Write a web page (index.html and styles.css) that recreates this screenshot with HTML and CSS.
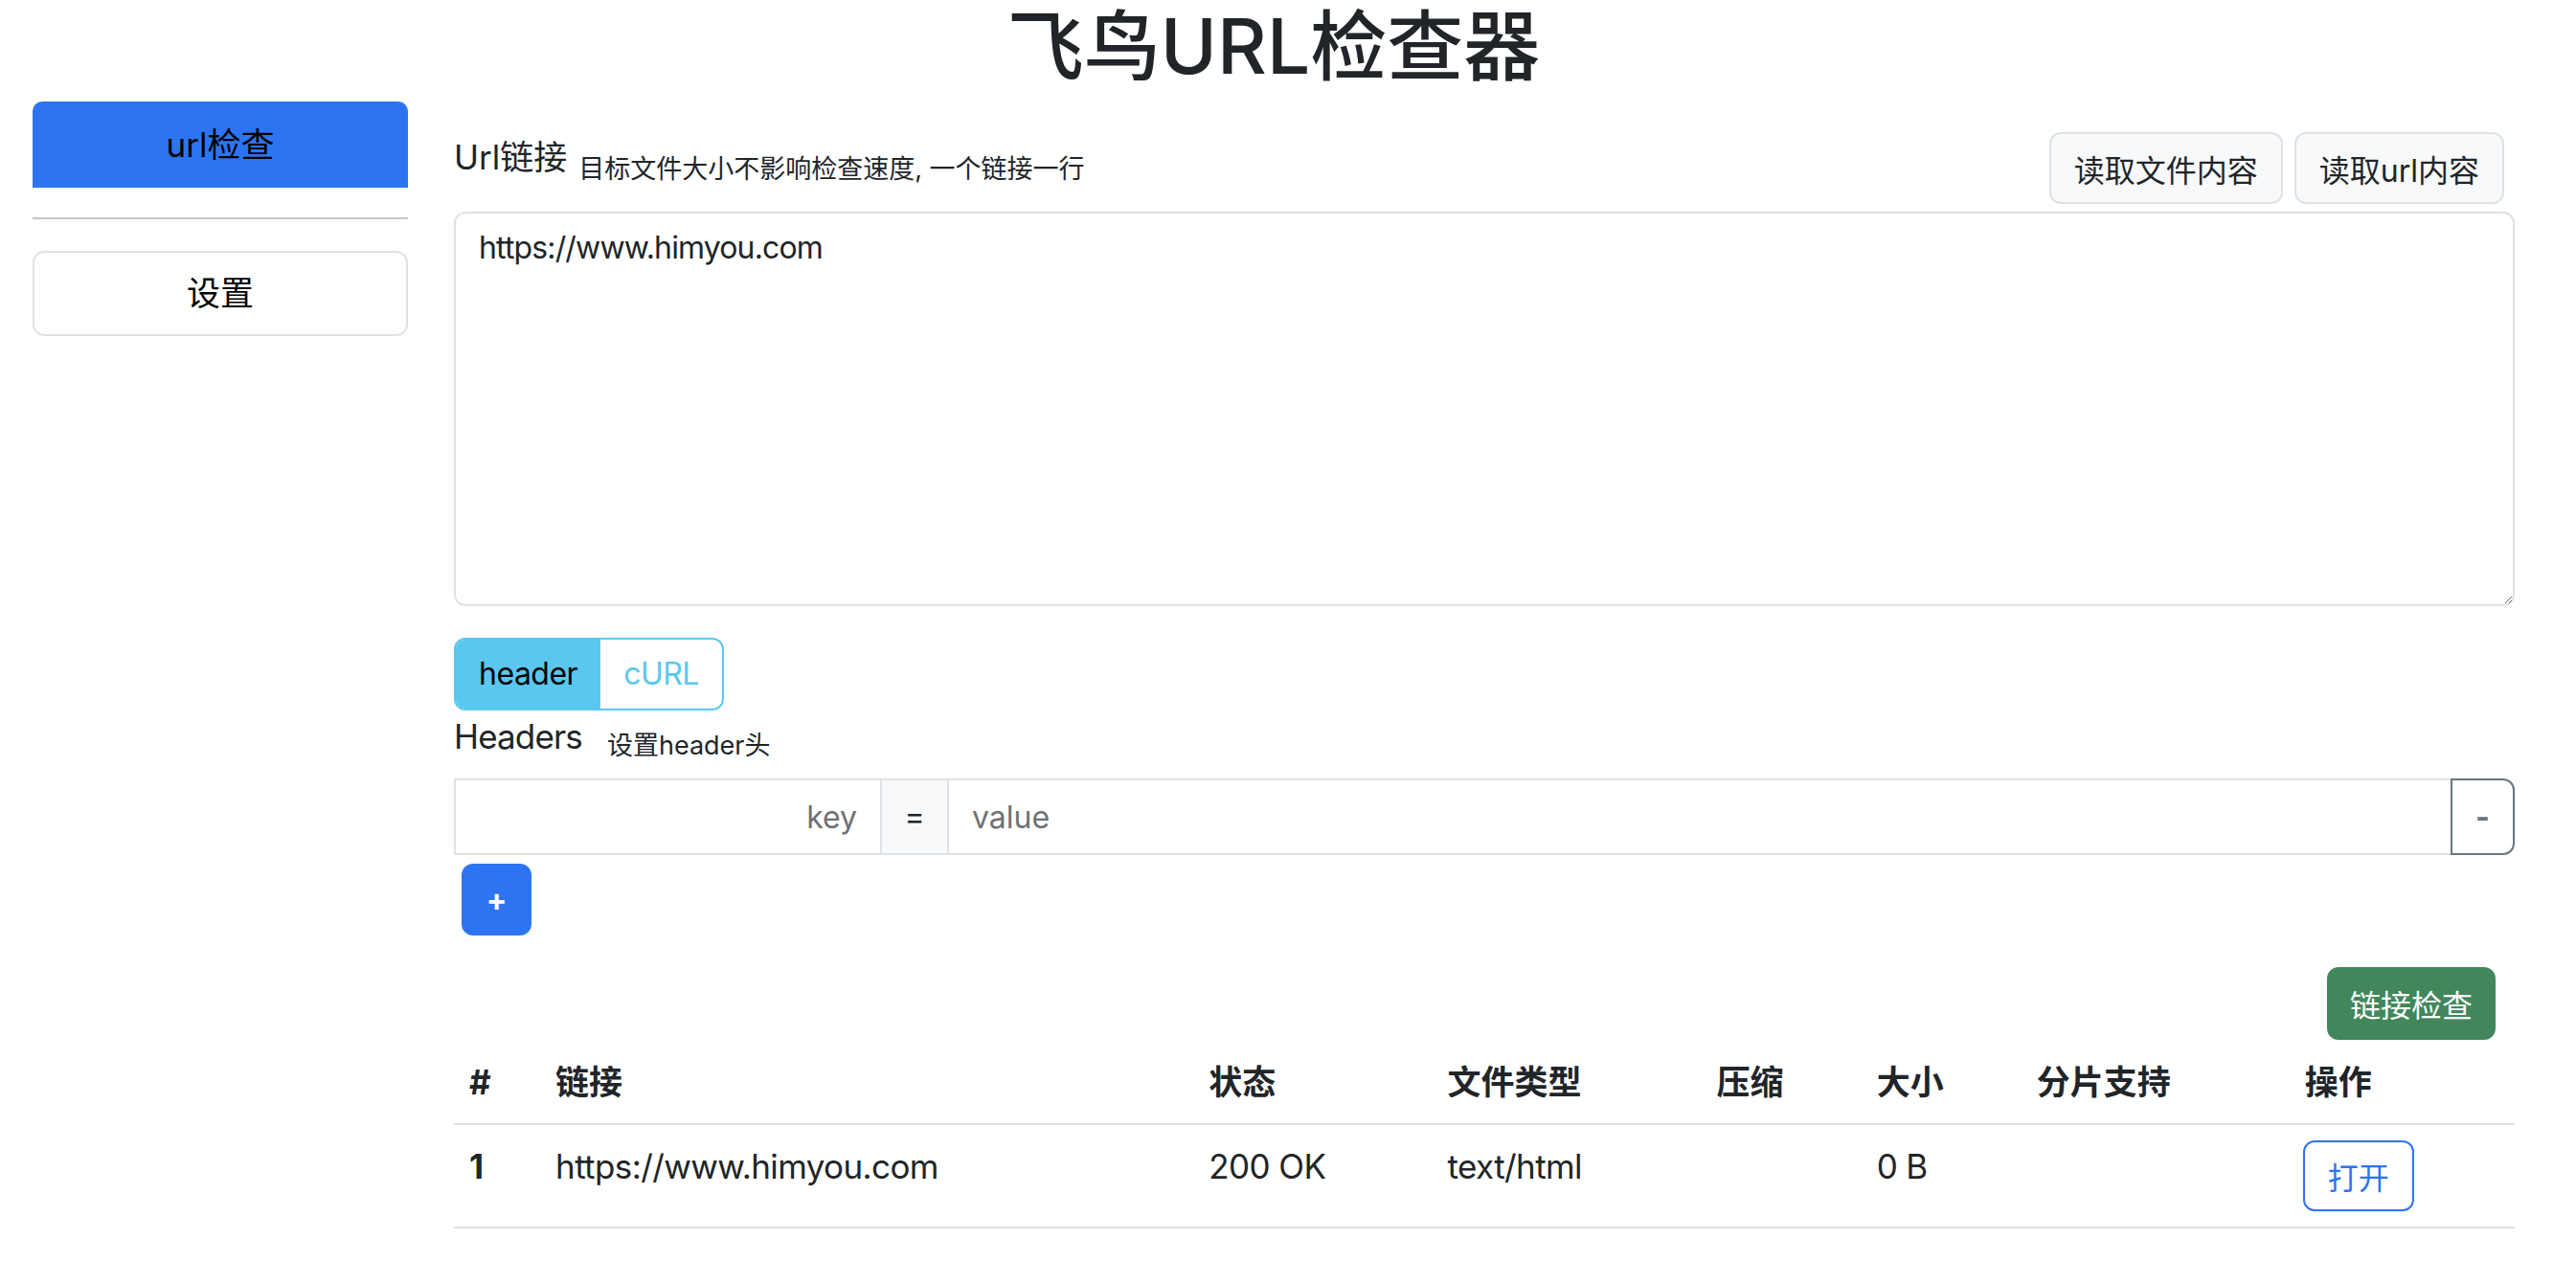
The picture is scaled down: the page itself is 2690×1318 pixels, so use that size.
FILE: index.html
```html
<!DOCTYPE html>
<html lang="zh-CN">
<head>
<meta charset="utf-8">
<title>飞鸟URL检查器</title>
<link rel="stylesheet" href="styles.css">
</head>
<body>
<div class="page">
  <h1 class="title">飞鸟URL检查器</h1>
  <div class="layout">
    <aside class="sidebar">
      <div class="nav-btn active">url检查</div>
      <hr class="divider">
      <div class="nav-btn plain">设置</div>
    </aside>
    <main class="main">
      <div class="url-head">
        <div class="label-group">
          <span class="lbl">Url链接</span>
          <span class="hint hint-url">目标文件大小不影响检查速度, 一个链接一行</span>
        </div>
        <div class="read-btns">
          <button class="btn-light">读取文件内容</button>
          <button class="btn-light">读取url内容</button>
        </div>
      </div>
      <textarea class="urls">https://www.himyou.com</textarea>
      <div class="toggle">
        <span class="seg on">header</span><span class="seg">cURL</span>
      </div>
      <div class="headers-head">
        <span class="lbl lbl-hdr">Headers</span>
        <span class="hint hint-hdr">设置header头</span>
      </div>
      <div class="kv">
        <input class="kv-key" placeholder="key">
        <span class="kv-eq">=</span>
        <input class="kv-val" placeholder="value">
        <button class="kv-del">-</button>
      </div>
      <button class="btn-add">+</button>
      <div class="check-row"><button class="btn-go">链接检查</button></div>
      <table class="results">
        <colgroup>
          <col class="c-num"><col class="c-link"><col class="c-status"><col class="c-type">
          <col class="c-zip"><col class="c-size"><col class="c-range"><col class="c-op">
        </colgroup>
        <thead>
          <tr><th>#</th><th>链接</th><th>状态</th><th>文件类型</th><th>压缩</th><th>大小</th><th>分片支持</th><th>操作</th></tr>
        </thead>
        <tbody>
          <tr><th class="row-num">1</th><td class="latin">https://www.himyou.com</td><td class="latin">200 OK</td><td class="latin">text/html</td><td></td><td class="latin">0 B</td><td></td><td><button class="btn-open">打开</button></td></tr>
        </tbody>
      </table>
    </main>
  </div>
</div>
</body>
</html>
```
FILE: styles.css
```css
html, body {
  margin: 0;
  padding: 0;
  background: #fff;
}
body {
  font-family: Inter, "Noto Sans CJK SC", sans-serif;
  font-size: 32px;
  line-height: 1.5;
  color: #212529;
}
button, input, textarea {
  font-family: inherit;
  font-size: 32px;
}
.page {
  width: 2660px;
  box-sizing: border-box;
  padding: 0 34px;
}
.title {
  margin: 0;
  font-size: 80px;
  font-weight: 500;
  line-height: 96px;
  text-align: center;
}
.layout {
  display: flex;
  gap: 48px;
  margin-top: 10px;
}
.sidebar {
  width: 392px;
  flex: none;
}
.nav-btn {
  display: flex;
  align-items: center;
  justify-content: center;
  font-size: 35px;
  color: #000;
  box-sizing: border-box;
}
.nav-btn.active {
  height: 90px;
  background: #2d74f3;
  border-radius: 10px 10px 0 0;
}
.nav-btn.plain {
  height: 89px;
  border: 2px solid #dee2e6;
  border-radius: 12px;
}
.divider {
  margin: 31px 0 33px;
  border: 0;
  border-top: 2px solid #c6c6c6;
  height: 0;
}
.main {
  flex: 1;
  min-width: 0;
  padding-top: 32px;
}
.url-head {
  display: flex;
  justify-content: space-between;
  align-items: flex-start;
}
.label-group {
  display: flex;
  align-items: flex-start;
}
.lbl {
  font-size: 35px;
  line-height: 52px;
}
.lbl-hdr {
  letter-spacing: -0.85px;
}
.hint {
  font-size: 27px;
  line-height: 40px;
}
.hint-url {
  margin-left: 12px;
  margin-top: 19px;
}
.read-btns {
  display: flex;
  gap: 12px;
  margin-right: 11px;
}
.btn-light {
  height: 75px;
  padding: 0 24px;
  background: #f8f9fa;
  border: 2px solid #dee2e6;
  border-radius: 12px;
  color: #212529;
}
.urls {
  display: block;
  width: 100%;
  box-sizing: border-box;
  height: 412px;
  margin: 8px 0 0;
  padding: 12px 24px;
  border: 2px solid #dee2e6;
  border-radius: 12px;
  line-height: 1.5;
  letter-spacing: -0.85px;
  color: #212529;
  resize: vertical;
  outline: none;
}
.toggle {
  display: flex;
  width: max-content;
  margin-top: 33px;
  height: 76px;
  box-sizing: border-box;
  border: 2px solid #5ac8ee;
  border-radius: 12px;
  overflow: hidden;
}
.seg {
  padding: 0 24px;
  line-height: 72px;
  color: #5ac8ee;
  letter-spacing: -0.5px;
}
.seg.on {
  background: #5ac8ee;
  color: #000;
}
.headers-head {
  display: flex;
  align-items: flex-start;
  margin-top: 1px;
}
.hint-hdr {
  margin-left: 26px;
  margin-top: 16px;
}
.kv {
  display: flex;
  height: 80px;
  margin-top: 14px;
}
.kv input {
  height: 80px;
  box-sizing: border-box;
  padding: 0 24px;
  color: #212529;
  outline: none;
  border-radius: 0;
}
.kv input::placeholder {
  color: #6f7173;
}
.kv-key {
  width: 447px;
  flex: none;
  border: 2px solid #dee2e6;
  text-align: right;
}
.kv-eq {
  width: 70px;
  flex: none;
  box-sizing: border-box;
  display: flex;
  align-items: center;
  justify-content: center;
  background: #f8f9fa;
  border-top: 2px solid #dee2e6;
  border-bottom: 2px solid #dee2e6;
  border-right: 2px solid #dee2e6;
}
.kv-val {
  flex: 1;
  min-width: 0;
  border: 2px solid #dee2e6;
  border-left: 0;
  border-right: 0;
}
.kv-del {
  width: 67px;
  flex: none;
  height: 80px;
  background: #fff;
  border: 2px solid #6c757d;
  border-radius: 0 12px 12px 0;
  color: #6c757d;
  font-weight: 700;
  padding: 0;
}
.btn-add {
  display: block;
  margin: 9px 0 0 8px;
  width: 73px;
  height: 75px;
  background: #2d74f3;
  border: 0;
  border-radius: 12px;
  color: #fff;
  font-weight: 700;
  padding: 0;
}
.check-row {
  display: flex;
  justify-content: flex-end;
  margin-top: 33px;
  padding-right: 20px;
}
.btn-go {
  height: 76px;
  padding: 0 24px;
  background: #41875b;
  color: #fff;
  border: 0;
  border-radius: 12px;
}
.results {
  width: 100%;
  table-layout: fixed;
  border-collapse: collapse;
  margin-top: 7px;
}
.results th, .results td {
  padding: 16px;
  text-align: left;
  vertical-align: top;
  border-bottom: 2px solid #dee2e6;
  font-size: 35px;
  line-height: 48px;
}
.results thead th {
  padding-top: 13px;
  padding-bottom: 19px;
}
.results th {
  font-weight: 700;
}
.results td.latin, .results th.row-num {
  padding-top: 19px;
}
.results td.latin {
  letter-spacing: -0.6px;
}
.c-num { width: 90px; }
.c-link { width: 682px; }
.c-status { width: 249px; }
.c-type { width: 281px; }
.c-zip { width: 167px; }
.c-size { width: 167px; }
.c-range { width: 280px; }
.c-op { width: 235px; }
.btn-open {
  display: block;
  height: 74px;
  padding: 0 24px;
  margin-left: -2px;
  background: #fff;
  border: 2px solid #2d74f3;
  border-radius: 12px;
  color: #2d74f3;
}
```
